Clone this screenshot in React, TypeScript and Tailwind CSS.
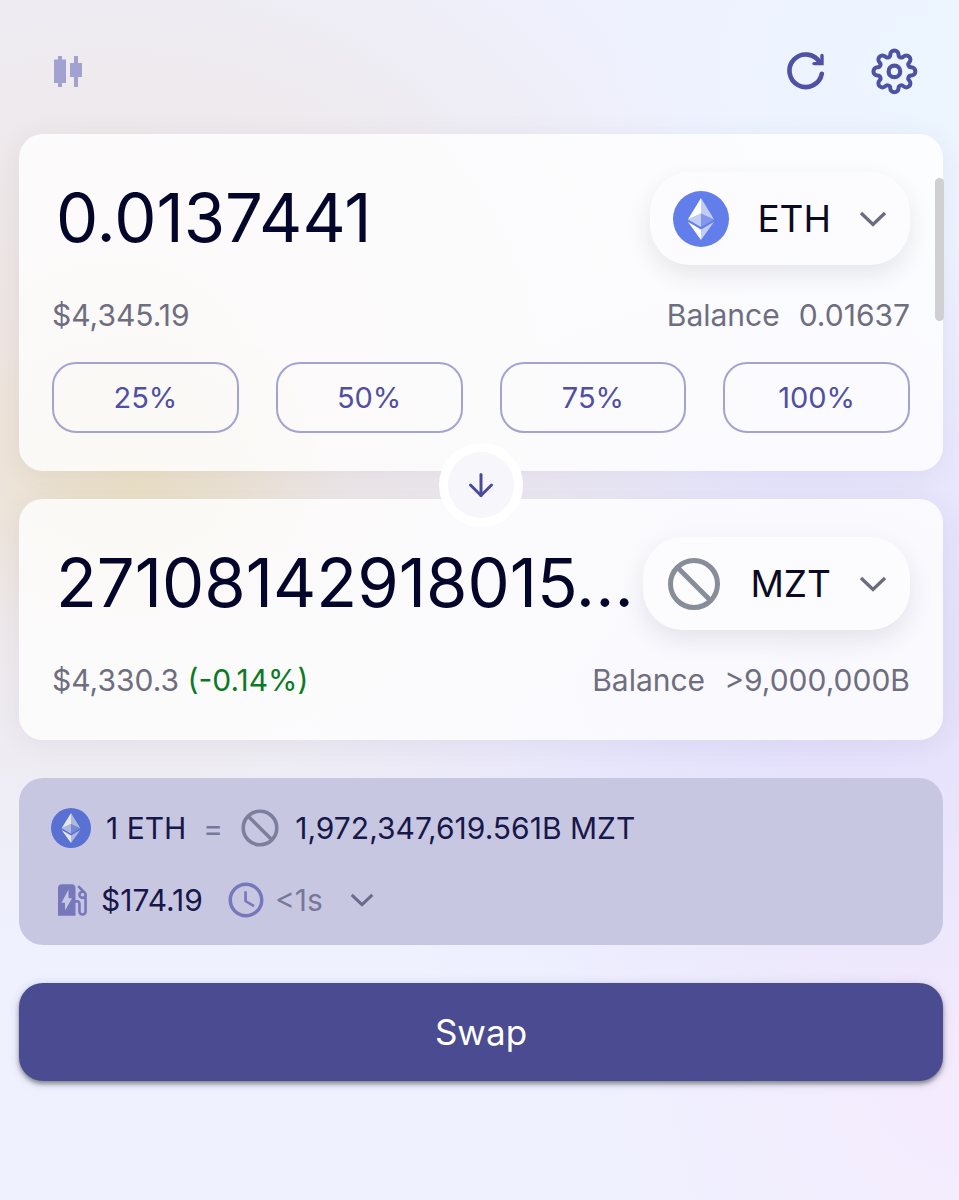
import type { ReactNode } from 'react'
import { ArrowDown } from 'lucide-react'
import { MdAccessTime, MdEvStation } from 'react-icons/md'

const PERCENTS = ['25%', '50%', '75%', '100%']

interface IconProps {
  className?: string
}

function CandlesIcon({ className }: IconProps) {
  return (
    <svg viewBox="0 0 28 31" className={className} fill="currentColor" aria-hidden="true">
      <path d="M4 0h4v3.5h4v23.5H8V31H4v-4H0V3.5h4zM20 0h4v7h4v14h-4v10h-4V21h-4V7h4z" />
    </svg>
  )
}

function RefreshIcon({ className }: IconProps) {
  return (
    <svg
      viewBox="0 0 40 40"
      className={className}
      fill="none"
      stroke="currentColor"
      strokeLinecap="round"
      aria-hidden="true"
    >
      <path d="M35.8 22.8A16.3 16.3 0 1 1 34 11.8" strokeWidth="4.6" />
      <path d="M36 4.4v8.2h-8" strokeWidth="3.4" />
    </svg>
  )
}

// eight round teeth joined by round valleys
function gearPath(center: number) {
  const tooth = { dist: 17, r: 4.1 }
  const valley = { dist: 18.1, r: 2.8 }
  const at = (dist: number, deg: number) => {
    const rad = (deg * Math.PI) / 180
    return { x: center + dist * Math.cos(rad), y: center + dist * Math.sin(rad) }
  }
  const touch = (toothDeg: number, valleyDeg: number) => {
    const a = at(tooth.dist, toothDeg)
    const b = at(valley.dist, valleyDeg)
    const t = tooth.r / (tooth.r + valley.r)
    return `${(a.x + (b.x - a.x) * t).toFixed(2)} ${(a.y + (b.y - a.y) * t).toFixed(2)}`
  }

  let d = `M${touch(0, -22.5)}`
  for (let deg = 0; deg < 360; deg += 45) {
    d += `A${tooth.r} ${tooth.r} 0 1 1 ${touch(deg, deg + 22.5)}`
    d += `A${valley.r} ${valley.r} 0 0 0 ${touch(deg + 45, deg + 22.5)}`
  }
  return d + 'Z'
}

function GearIcon({ className }: IconProps) {
  return (
    <svg viewBox="0 0 48 48" className={className} fill="none" stroke="currentColor" aria-hidden="true">
      <path d={gearPath(24.4)} strokeWidth="4" strokeLinejoin="round" />
      <circle cx="24.4" cy="24.4" r="5.8" strokeWidth="4.2" />
    </svg>
  )
}

function ChevronIcon({ className }: IconProps) {
  return (
    <svg viewBox="0 0 28 16" className={className} fill="none" stroke="currentColor" aria-hidden="true">
      <path d="M2 2l12 11.4L26 2" strokeWidth="3.4" />
    </svg>
  )
}

function EthIcon({ className }: IconProps) {
  return (
    <svg viewBox="0 0 32 32" className={className} aria-hidden="true">
      <circle cx="16" cy="16" r="16" fill="#627eea" />
      <g fill="#fff">
        <path fillOpacity=".602" d="M16 4v8.87l7.497 3.35z" />
        <path d="M16 4L8.5 16.22l7.5-3.35z" />
        <path fillOpacity=".602" d="M16 21.968v6.027l7.5-10.379z" />
        <path d="M16 27.995v-6.028l-7.5-4.351z" />
        <path fillOpacity=".2" d="M16 20.573l7.497-4.353L16 12.872z" />
        <path fillOpacity=".602" d="M8.5 16.22l7.5 4.353v-7.701z" />
      </g>
    </svg>
  )
}

function NoLogoIcon({ className }: IconProps) {
  return (
    <svg viewBox="0 0 56 56" className={className} fill="none" stroke="currentColor" strokeWidth="5" aria-hidden="true">
      <circle cx="28" cy="28" r="23.5" />
      <path d="M11.5 11.5l33 33" />
    </svg>
  )
}

interface TokenCardProps {
  label: string
  amount: string
  readOnly?: boolean
  symbol: string
  icon: ReactNode
  fiat: string
  change?: string
  balance: string
  className: string
  children?: ReactNode
}

function TokenCard({
  label,
  amount,
  readOnly,
  symbol,
  icon,
  fiat,
  change,
  balance,
  className,
  children,
}: TokenCardProps) {
  return (
    <section className={`rounded-3xl bg-white/80 px-[33px] pt-[38px] shadow-[0_4px_28px_rgba(60,60,100,0.07)] ${className}`}>
      <div className="flex items-center">
        <input
          aria-label={label}
          defaultValue={amount}
          readOnly={readOnly}
          className="h-[93px] min-w-0 flex-1 bg-transparent pl-1 text-[67px] text-[#03062a] outline-none"
        />
        <button className="flex h-[93px] shrink-0 items-center rounded-[40px] bg-[#fcfcfe] px-[23px] text-[37px] text-[#0a0a24] shadow-[0_10px_24px_rgba(40,40,60,0.1)]">
          {icon}
          <span className="mx-7">{symbol}</span>
          <ChevronIcon className="h-4 w-7 text-[#6c6c80]" />
        </button>
      </div>
      <div className="mt-[26px] flex h-12 items-center justify-between text-[30px] text-[#6e6e80]">
        <span>
          {fiat}
          {change && <span className="text-[#0b7a24]"> {change}</span>}
        </span>
        <span className="flex gap-[19px]">
          <span>Balance</span>
          <span>{balance}</span>
        </span>
      </div>
      {children}
    </section>
  )
}

export default function App() {
  return (
    <main className="relative min-h-screen bg-[#eff1ff] bg-[radial-gradient(ellipse_22%_14%_at_14%_40%,rgba(234,222,186,0.7),transparent),radial-gradient(ellipse_68%_48%_at_12%_32%,rgba(238,226,218,0.95),rgba(238,230,228,0.6)_55%,transparent),radial-gradient(ellipse_60%_35%_at_85%_55%,rgba(224,219,250,0.9),transparent),radial-gradient(ellipse_40%_25%_at_100%_6%,rgba(236,246,255,0.9),transparent),radial-gradient(ellipse_40%_40%_at_100%_88%,rgba(245,234,253,0.9),transparent)] pr-4 pb-[118px] pl-[19px] font-[Inter,'Liberation_Sans',sans-serif]">
      <header className="flex h-[134px] items-center justify-between pt-2 pr-[25px] pl-[35px] text-[#4f51a3]">
        <button aria-label="Chart" className="text-[#a2a2d0]">
          <CandlesIcon className="h-[31px] w-7" />
        </button>
        <div className="flex items-center gap-11">
          <button aria-label="Refresh">
            <RefreshIcon className="size-10" />
          </button>
          <button aria-label="Settings">
            <GearIcon className="size-12" />
          </button>
        </div>
      </header>

      <TokenCard
        label="You pay"
        amount="0.0137441"
        symbol="ETH"
        icon={<EthIcon className="size-14" />}
        fiat="$4,345.19"
        balance="0.01637"
        className="pb-[38px]"
      >
        <div className="mt-[23px] grid grid-cols-4 gap-[37px]">
          {PERCENTS.map(percent => (
            <button
              key={percent}
              className="h-[71px] rounded-3xl border-2 border-[#a3a3d1] text-[29px] text-[#4f4fa5]"
            >
              {percent}
            </button>
          ))}
        </div>
      </TokenCard>

      <div className="relative z-10 flex h-7 items-center justify-center">
        <button
          aria-label="Switch tokens"
          className="flex size-[84px] shrink-0 items-center justify-center rounded-full border-[9px] border-white bg-[#f6f6fb] text-[#4a4b9b]"
        >
          <ArrowDown size={36} />
        </button>
      </div>

      <TokenCard
        label="You receive"
        amount="27108142918015..."
        readOnly
        symbol="MZT"
        icon={<NoLogoIcon className="size-14 text-[#878d99]" />}
        fiat="$4,330.3"
        change="(-0.14%)"
        balance=">9,000,000B"
        className="pb-9"
      />

      <section className="mt-[38px] rounded-3xl bg-[#c8c7e2] px-8 pt-[30px] pb-[25px] text-[30px] text-[#17174a]">
        <div className="flex h-10 items-center">
          <EthIcon className="size-10 brightness-90" />
          <span className="ml-[15px]">1 ETH</span>
          <span className="mx-[17px] text-[#77779a]">=</span>
          <NoLogoIcon className="size-10 text-[#7c7f9b]" />
          <span className="ml-[15px]">1,972,347,619.561B MZT</span>
        </div>
        <div className="mt-8 flex h-10 items-center">
          <MdEvStation size={42} className="text-[#7678bb]" />
          <span className="ml-2">$174.19</span>
          <MdAccessTime size={42} className="ml-[22px] text-[#7678bb]" />
          <span className="ml-2 text-[#77779a]">&lt;1s</span>
          <button aria-label="Show details" className="ml-[27px]">
            <ChevronIcon className="h-[14px] w-6 text-[#6b6b8c]" />
          </button>
        </div>
      </section>

      <button className="mt-[38px] h-[98px] w-full rounded-3xl bg-[#4a4b90] text-[35px] text-white shadow-[0_3px_4px_rgba(30,40,30,0.45),0_2px_12px_rgba(40,40,80,0.15)]">
        Swap
      </button>

      {/* scroll thumb over the cards' right edge */}
      <div className="absolute top-[178px] right-[15px] z-20 h-[143px] w-[9px] rounded-full bg-[#d0d0d3]" />
    </main>
  )
}
